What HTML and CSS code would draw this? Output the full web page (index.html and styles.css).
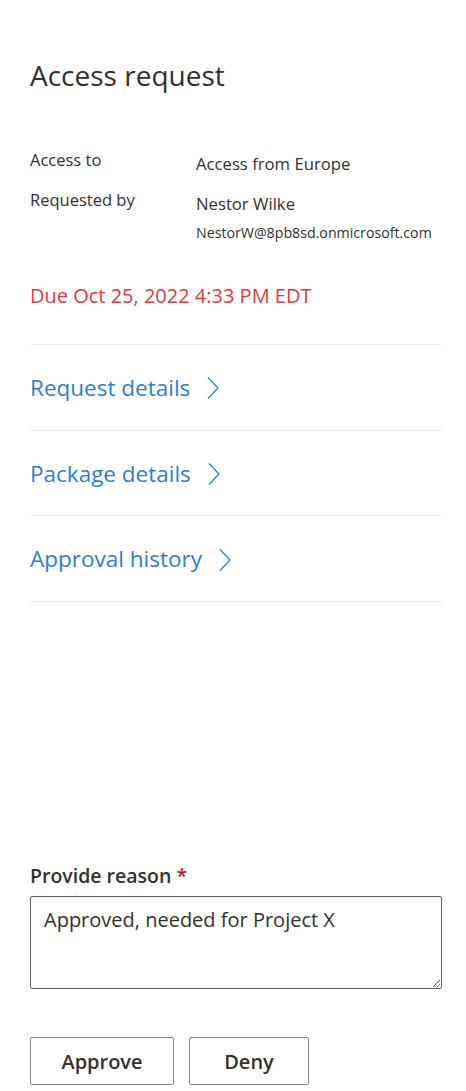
FILE: index.html
```html
<!DOCTYPE html>
<html>
<head>
<meta charset="utf-8">
<link rel="stylesheet" href="styles.css">
</head>
<body>
<div class="panel">
  <h1 class="title">Access request</h1>
  <div class="info">
    <div class="label">Access to</div>
    <div class="value">Access from Europe</div>
    <div class="label">Requested by</div>
    <div class="value">
      <div>Nestor Wilke</div>
      <div class="email">NestorW@8pb8sd.onmicrosoft.com</div>
    </div>
  </div>
  <div class="due">Due Oct 25, 2022 4:33 PM EDT</div>
  <div class="links">
    <a class="link">Request details <svg class="chev" viewBox="0 0 12 22" width="12" height="22"><path d="M1 0.5 L11 11 L1 21.5" fill="none" stroke="currentColor" stroke-width="1.3"/></svg></a>
    <a class="link">Package details <svg class="chev" viewBox="0 0 12 22" width="12" height="22"><path d="M1 0.5 L11 11 L1 21.5" fill="none" stroke="currentColor" stroke-width="1.3"/></svg></a>
    <a class="link">Approval history <svg class="chev" viewBox="0 0 12 22" width="12" height="22"><path d="M1 0.5 L11 11 L1 21.5" fill="none" stroke="currentColor" stroke-width="1.3"/></svg></a>
  </div>
  <div class="spacer"></div>
  <label class="reason-label">Provide reason <span class="req">*</span></label>
  <textarea class="reason">Approved, needed for Project X</textarea>
  <div class="actions">
    <button class="btn approve">Approve</button>
    <button class="btn deny">Deny</button>
  </div>
</div>
</body>
</html>
```

FILE: styles.css
```css
html, body {
  margin: 0;
  padding: 0;
  background: #ffffff;
}
body {
  font-family: "Open Sans", "Noto Sans", sans-serif;
  color: #323130;
}
.panel {
  padding: 0 24px 0 30px;
  display: flex;
  flex-direction: column;
}
.title {
  margin: 55px 0 0 0;
  font-size: 28px;
  font-weight: 400;
  line-height: 40px;
}
.info {
  margin-top: 55px;
  display: grid;
  grid-template-columns: 166px 1fr;
  row-gap: 14px;
}
.label {
  font-size: 16.5px;
  line-height: 20px;
}
.value {
  font-size: 16.7px;
  line-height: 24px;
  padding-top: 2px;
}
.email {
  font-size: 14.2px;
  line-height: 20px;
  margin-top: 7px;
}
.due {
  margin-top: 39px;
  color: #e9373d;
  font-size: 20px;
  line-height: 28px;
}
.links {
  margin-top: 34px;
  border-top: 1px solid #edebe9;
  display: flex;
  flex-direction: column;
}
.link {
  display: flex;
  align-items: center;
  gap: 17px;
  height: 84.7px;
  border-bottom: 1px solid #edebe9;
  color: #2d7ed6;
  font-size: 22.5px;
}
.chev {
  color: #2d7ed6;
  margin-top: 2px;
}
.spacer {
  height: 260px;
}
.reason-label {
  font-size: 19.5px;
  font-weight: 600;
  line-height: 28px;
}
.req {
  color: #a4262c;
}
.reason {
  margin-top: 6px;
  width: 412px;
  height: 93px;
  box-sizing: border-box;
  border: 1px solid #605e5c;
  border-radius: 2px;
  padding: 9px 13px;
  font-family: "Open Sans", "Noto Sans", sans-serif;
  font-size: 20px;
  line-height: 28px;
  color: #323130;
  resize: vertical;
}
.actions {
  margin-top: 48px;
  display: flex;
  gap: 15px;
}
.btn {
  height: 48px;
  box-sizing: border-box;
  border: 1px solid #8a8886;
  border-radius: 2px;
  background: #ffffff;
  font-family: "Open Sans", "Noto Sans", sans-serif;
  font-size: 20px;
  font-weight: 600;
  color: #323130;
}
.approve { width: 144px; }
.deny { width: 120px; }
```
